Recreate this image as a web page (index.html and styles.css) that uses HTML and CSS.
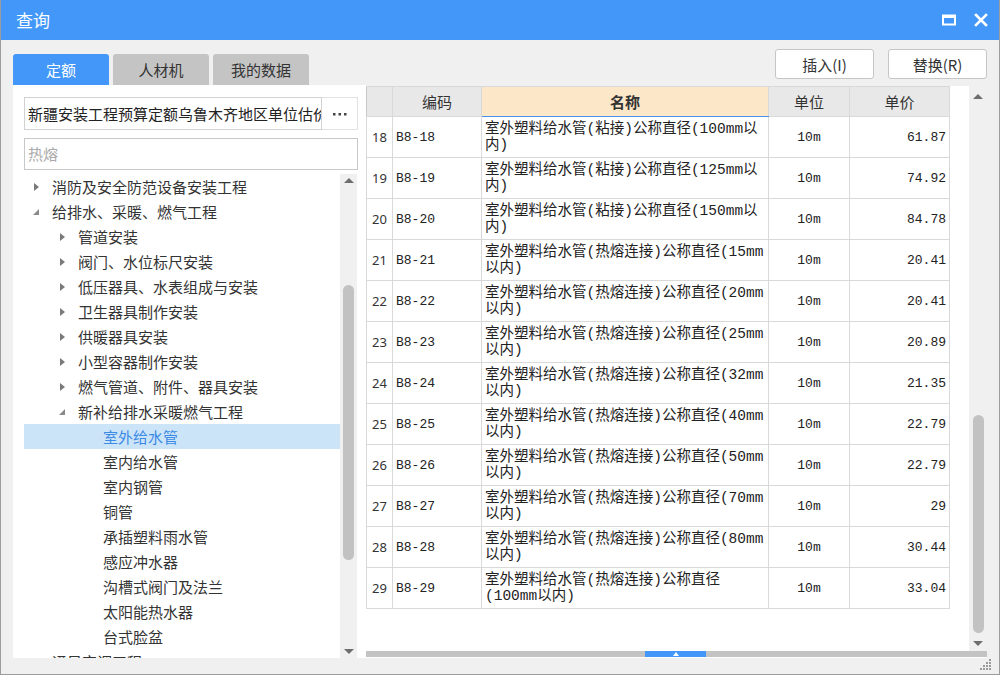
FILE: index.html
```html
<!DOCTYPE html>
<html lang="zh-CN">
<head>
<meta charset="utf-8">
<title>查询</title>
<link rel="stylesheet" href="styles.css">
</head>
<body>
<div class="window">
  <div class="titlebar">
    <span class="title">查询</span>
    <div class="win-btns">
      <svg class="wbtn" width="14" height="12" viewBox="0 0 14 12"><rect x="1" y="1.5" width="12" height="9" fill="none" stroke="#fff" stroke-width="2"/><rect x="1" y="1" width="12" height="3" fill="#fff"/></svg>
      <svg class="wbtn" width="14" height="14" viewBox="0 0 14 14"><path d="M2 2 L12 12 M12 2 L2 12" stroke="#fff" stroke-width="2.6" stroke-linecap="square"/></svg>
    </div>
  </div>
  <div class="main">
    <div class="left">
      <div class="tabs">
        <div class="tab active">定额</div>
        <div class="tab">人材机</div>
        <div class="tab">我的数据</div>
      </div>
      <div class="panel">
        <div class="combo">
          <div class="combo-text">新疆安装工程预算定额乌鲁木齐地区单位估价</div>
          <div class="combo-btn"><svg width="14" height="4" viewBox="0 0 14 4"><g fill="#444"><rect x="0" y="1" width="2.5" height="2.5"/><rect x="5.5" y="1" width="2.5" height="2.5"/><rect x="11" y="1" width="2.5" height="2.5"/></g></svg></div>
        </div>
        <div class="search">热熔</div>
        <div class="tree-wrap">
          <div class="tree">
            <div class="node l0"><span class="arr closed"></span>消防及安全防范设备安装工程</div>
            <div class="node l0"><span class="arr open"></span>给排水、采暖、燃气工程</div>
            <div class="node l1"><span class="arr closed"></span>管道安装</div>
            <div class="node l1"><span class="arr closed"></span>阀门、水位标尺安装</div>
            <div class="node l1"><span class="arr closed"></span>低压器具、水表组成与安装</div>
            <div class="node l1"><span class="arr closed"></span>卫生器具制作安装</div>
            <div class="node l1"><span class="arr closed"></span>供暖器具安装</div>
            <div class="node l1"><span class="arr closed"></span>小型容器制作安装</div>
            <div class="node l1"><span class="arr closed"></span>燃气管道、附件、器具安装</div>
            <div class="node l1"><span class="arr open"></span>新补给排水采暖燃气工程</div>
            <div class="node l2 selected">室外给水管</div>
            <div class="node l2">室内给水管</div>
            <div class="node l2">室内钢管</div>
            <div class="node l2">铜管</div>
            <div class="node l2">承插塑料雨水管</div>
            <div class="node l2">感应冲水器</div>
            <div class="node l2">沟槽式阀门及法兰</div>
            <div class="node l2">太阳能热水器</div>
            <div class="node l2">台式脸盆</div>
            <div class="node l0"><span class="arr none"></span>通风空调工程</div>
          </div>
          <div class="vscroll tree-scroll">
            <span class="up"></span>
            <span class="thumb"></span>
            <span class="down"></span>
          </div>
        </div>
      </div>
    </div>
    <div class="right">
      <div class="actions">
        <button class="btn">插入(I)</button>
        <button class="btn">替换(R)</button>
      </div>
      <div class="grid-area">
        <div class="grid-top">
          <div class="grid">
            <table>
              <colgroup><col class="c-no"><col class="c-code"><col class="c-name"><col class="c-unit"><col class="c-price"></colgroup>
              <thead>
                <tr><th></th><th>编码</th><th class="h-name">名称</th><th>单位</th><th>单价</th></tr>
              </thead>
              <tbody>
                <tr><td class="no">18</td><td class="code">B8-18</td><td class="name">室外塑料给水管(粘接)公称直径(100mm以<br>内)</td><td class="unit">10m</td><td class="price">61.87</td></tr>
                <tr><td class="no">19</td><td class="code">B8-19</td><td class="name">室外塑料给水管(粘接)公称直径(125mm以<br>内)</td><td class="unit">10m</td><td class="price">74.92</td></tr>
                <tr><td class="no">20</td><td class="code">B8-20</td><td class="name">室外塑料给水管(粘接)公称直径(150mm以<br>内)</td><td class="unit">10m</td><td class="price">84.78</td></tr>
                <tr><td class="no">21</td><td class="code">B8-21</td><td class="name">室外塑料给水管(热熔连接)公称直径(15mm<br>以内)</td><td class="unit">10m</td><td class="price">20.41</td></tr>
                <tr><td class="no">22</td><td class="code">B8-22</td><td class="name">室外塑料给水管(热熔连接)公称直径(20mm<br>以内)</td><td class="unit">10m</td><td class="price">20.41</td></tr>
                <tr><td class="no">23</td><td class="code">B8-23</td><td class="name">室外塑料给水管(热熔连接)公称直径(25mm<br>以内)</td><td class="unit">10m</td><td class="price">20.89</td></tr>
                <tr><td class="no">24</td><td class="code">B8-24</td><td class="name">室外塑料给水管(热熔连接)公称直径(32mm<br>以内)</td><td class="unit">10m</td><td class="price">21.35</td></tr>
                <tr><td class="no">25</td><td class="code">B8-25</td><td class="name">室外塑料给水管(热熔连接)公称直径(40mm<br>以内)</td><td class="unit">10m</td><td class="price">22.79</td></tr>
                <tr><td class="no">26</td><td class="code">B8-26</td><td class="name">室外塑料给水管(热熔连接)公称直径(50mm<br>以内)</td><td class="unit">10m</td><td class="price">22.79</td></tr>
                <tr><td class="no">27</td><td class="code">B8-27</td><td class="name">室外塑料给水管(热熔连接)公称直径(70mm<br>以内)</td><td class="unit">10m</td><td class="price">29</td></tr>
                <tr><td class="no">28</td><td class="code">B8-28</td><td class="name">室外塑料给水管(热熔连接)公称直径(80mm<br>以内)</td><td class="unit">10m</td><td class="price">30.44</td></tr>
                <tr><td class="no">29</td><td class="code">B8-29</td><td class="name">室外塑料给水管(热熔连接)公称直径<br>(100mm以内)</td><td class="unit">10m</td><td class="price">33.04</td></tr>
              </tbody>
            </table>
          </div>
          <div class="vscroll grid-scroll">
            <span class="up"></span>
            <span class="thumb"></span>
            <span class="down"></span>
          </div>
        </div>
        <div class="hscroll"><div class="hthumb"><span class="hup"></span></div></div>
      </div>
    </div>
  </div>
  <svg class="grip" width="14" height="14" viewBox="0 0 14 14">
    <g fill="#9a9a9a">
      <rect x="10" y="2" width="2" height="2"/>
      <rect x="7" y="5" width="2" height="2"/><rect x="10" y="5" width="2" height="2"/>
      <rect x="4" y="8" width="2" height="2"/><rect x="7" y="8" width="2" height="2"/><rect x="10" y="8" width="2" height="2"/>
      <rect x="1" y="11" width="2" height="2"/><rect x="4" y="11" width="2" height="2"/><rect x="7" y="11" width="2" height="2"/><rect x="10" y="11" width="2" height="2"/>
    </g>
  </svg>
</div>
</body>
</html>
```

FILE: styles.css
```css
* { box-sizing: border-box; }
html, body { margin: 0; padding: 0; }
body {
  font-family: "Noto Sans CJK SC", "Noto Sans", sans-serif;
  color: #333;
  background: #f0f0f0;
}
.window {
  position: relative;
  width: 1000px;
  height: 675px;
  background: #f0f0f0;
  border: 1px solid #9c9c9c;
  border-top: none;
  overflow: hidden;
}
.titlebar {
  height: 40px;
  margin: 0 -1px;
  background: #4297f8;
  display: flex;
  align-items: center;
  justify-content: space-between;
  padding: 0 12px 0 16px;
}
.title {
  color: #fff;
  font-size: 17px;
  line-height: 20px;
}
.win-btns {
  display: flex;
  align-items: center;
  gap: 18px;
}
.wbtn { display: block; }

.main {
  display: flex;
  padding: 0 12px 0 12px;
}
.left {
  width: 353px;
  padding-top: 14px;
}
.tabs {
  display: flex;
  gap: 4px;
  height: 31px;
}
.tab {
  width: 96px;
  height: 31px;
  background: #c4c4c4;
  border-radius: 3px 3px 0 0;
  font-size: 15px;
  line-height: 31px;
  text-align: center;
  color: #333;
}
.tab.active {
  background: #4297f8;
  color: #fff;
}
.panel {
  height: 573px;
  background: #fff;
  padding: 12px 8px 0 11px;
}
.combo {
  display: flex;
  height: 33px;
}
.combo-text {
  width: 298px;
  border: 1px solid #d2d2d2;
  font-size: 15px;
  line-height: 31px;
  padding-left: 3px;
  white-space: nowrap;
  overflow: hidden;
  color: #222;
}
.combo-btn {
  width: 36px;
  border: 1px solid #e2e2e2;
  border-left: none;
  display: flex;
  align-items: center;
  justify-content: center;
}
.combo-btn svg { display: block; }
.search {
  margin-top: 8px;
  height: 32px;
  border: 1px solid #c8c8c8;
  font-size: 15px;
  line-height: 30px;
  padding-left: 3px;
  color: #aaa;
}
.tree-wrap {
  display: flex;
  margin-top: 4px;
  height: 484px;
  overflow: hidden;
}
.tree {
  width: 316px;
}
.node {
  height: 25px;
  display: flex;
  align-items: center;
  font-size: 15px;
  white-space: nowrap;
  color: #333;
}
.node.l0 { padding-left: 8px; }
.node.l1 { padding-left: 34px; }
.node.l2 { padding-left: 79px; }
.node.selected {
  background: #cce4f8;
  color: #3b8ae6;
}
.arr {
  width: 20px;
  height: 10px;
  position: relative;
  flex: none;
}
.arr.closed::before {
  content: "";
  position: absolute;
  left: 2px;
  top: 1px;
  border-style: solid;
  border-width: 4px 0 4px 5px;
  border-color: transparent transparent transparent #7a7a7a;
}
.arr.open::before {
  content: "";
  position: absolute;
  left: 1px;
  top: 2px;
  border-style: solid;
  border-width: 0 0 6px 6px;
  border-color: transparent transparent #8a8a8a transparent;
}

.vscroll {
  display: flex;
  flex-direction: column;
  align-items: center;
  background: #f0f0f0;
}
.vscroll .up, .vscroll .down {
  width: 0;
  height: 0;
  border-style: solid;
  flex: none;
}
.vscroll .up {
  border-width: 0 5px 5px 5px;
  border-color: transparent transparent #6e6e6e transparent;
}
.vscroll .down {
  border-width: 5px 5px 0 5px;
  border-color: #6e6e6e transparent transparent transparent;
}
.vscroll .thumb {
  width: 11px;
  background: #c2c2c2;
  border-radius: 6px;
  flex: none;
}
.tree-scroll {
  width: 17px;
  padding-top: 4px;
}
.tree-scroll .thumb {
  margin-top: 102px;
  height: 275px;
}
.tree-scroll .down {
  margin-top: 89px;
}

.right {
  width: 622px;
  padding-top: 9px;
}
.actions {
  display: flex;
  justify-content: flex-end;
  gap: 14px;
  height: 30px;
}
.btn {
  width: 99px;
  height: 30px;
  background: #fff;
  border: 1px solid #c6c6c6;
  border-radius: 3px;
  font-family: "Noto Sans CJK SC", "Noto Sans", sans-serif;
  font-size: 15px;
  color: #333;
  padding: 0;
}
.grid-area {
  margin-top: 7px;
  height: 572px;
  background: #fff;
  display: flex;
  flex-direction: column;
}
.grid-top {
  display: flex;
  height: 565px;
}
.grid {
  width: 603px;
  overflow: hidden;
}
table {
  border-collapse: collapse;
  table-layout: fixed;
  width: 583px;
}
.c-no { width: 26px; }
.c-code { width: 89px; }
.c-name { width: 287px; }
.c-unit { width: 81px; }
.c-price { width: 100px; }
th, td {
  border: 1px solid #d9d9d9;
  padding: 0;
}
th {
  height: 30px;
  background: #e8e8e8;
  font-weight: normal;
  font-size: 15px;
  color: #333;
  text-align: center;
}
th:first-child { border-left-color: #c8c8c8; }
th.h-name {
  background: #fde7c9;
  font-weight: bold;
  border-bottom: 1px solid #4a94ec;
}
td {
  height: 41px;
  vertical-align: middle;
  color: #222;
}
td.no {
  font-family: "Noto Sans", sans-serif;
  font-size: 13px;
  text-align: center;
  color: #333;
}
td.code, td.unit, td.price {
  font-family: "Liberation Mono", monospace;
  font-size: 13px;
}
td.code { padding-left: 3px; }
td.unit { text-align: center; }
td.price { text-align: right; padding-right: 3px; }
td.name {
  font-family: "Liberation Mono", "Noto Sans CJK SC", monospace;
  font-size: 14.5px;
  line-height: 16px;
  padding-left: 3px;
  white-space: nowrap;
  overflow: hidden;
}
.grid-scroll {
  width: 18px;
  padding-top: 8px;
}
.grid-scroll .thumb {
  margin-top: 316px;
  height: 218px;
}
.grid-scroll .down {
  margin-top: 8px;
}
.hscroll {
  height: 6px;
  background: #c3c3c3;
  padding-left: 279px;
}
.hthumb {
  width: 61px;
  height: 6px;
  background: #4297f8;
  display: flex;
  justify-content: center;
  align-items: flex-end;
}
.hup {
  width: 0;
  height: 0;
  border-style: solid;
  border-width: 0 3px 4px 3px;
  border-color: transparent transparent #fff transparent;
  margin-bottom: 1px;
}
.grip {
  position: absolute;
  right: 6px;
  bottom: 3px;
}
```
